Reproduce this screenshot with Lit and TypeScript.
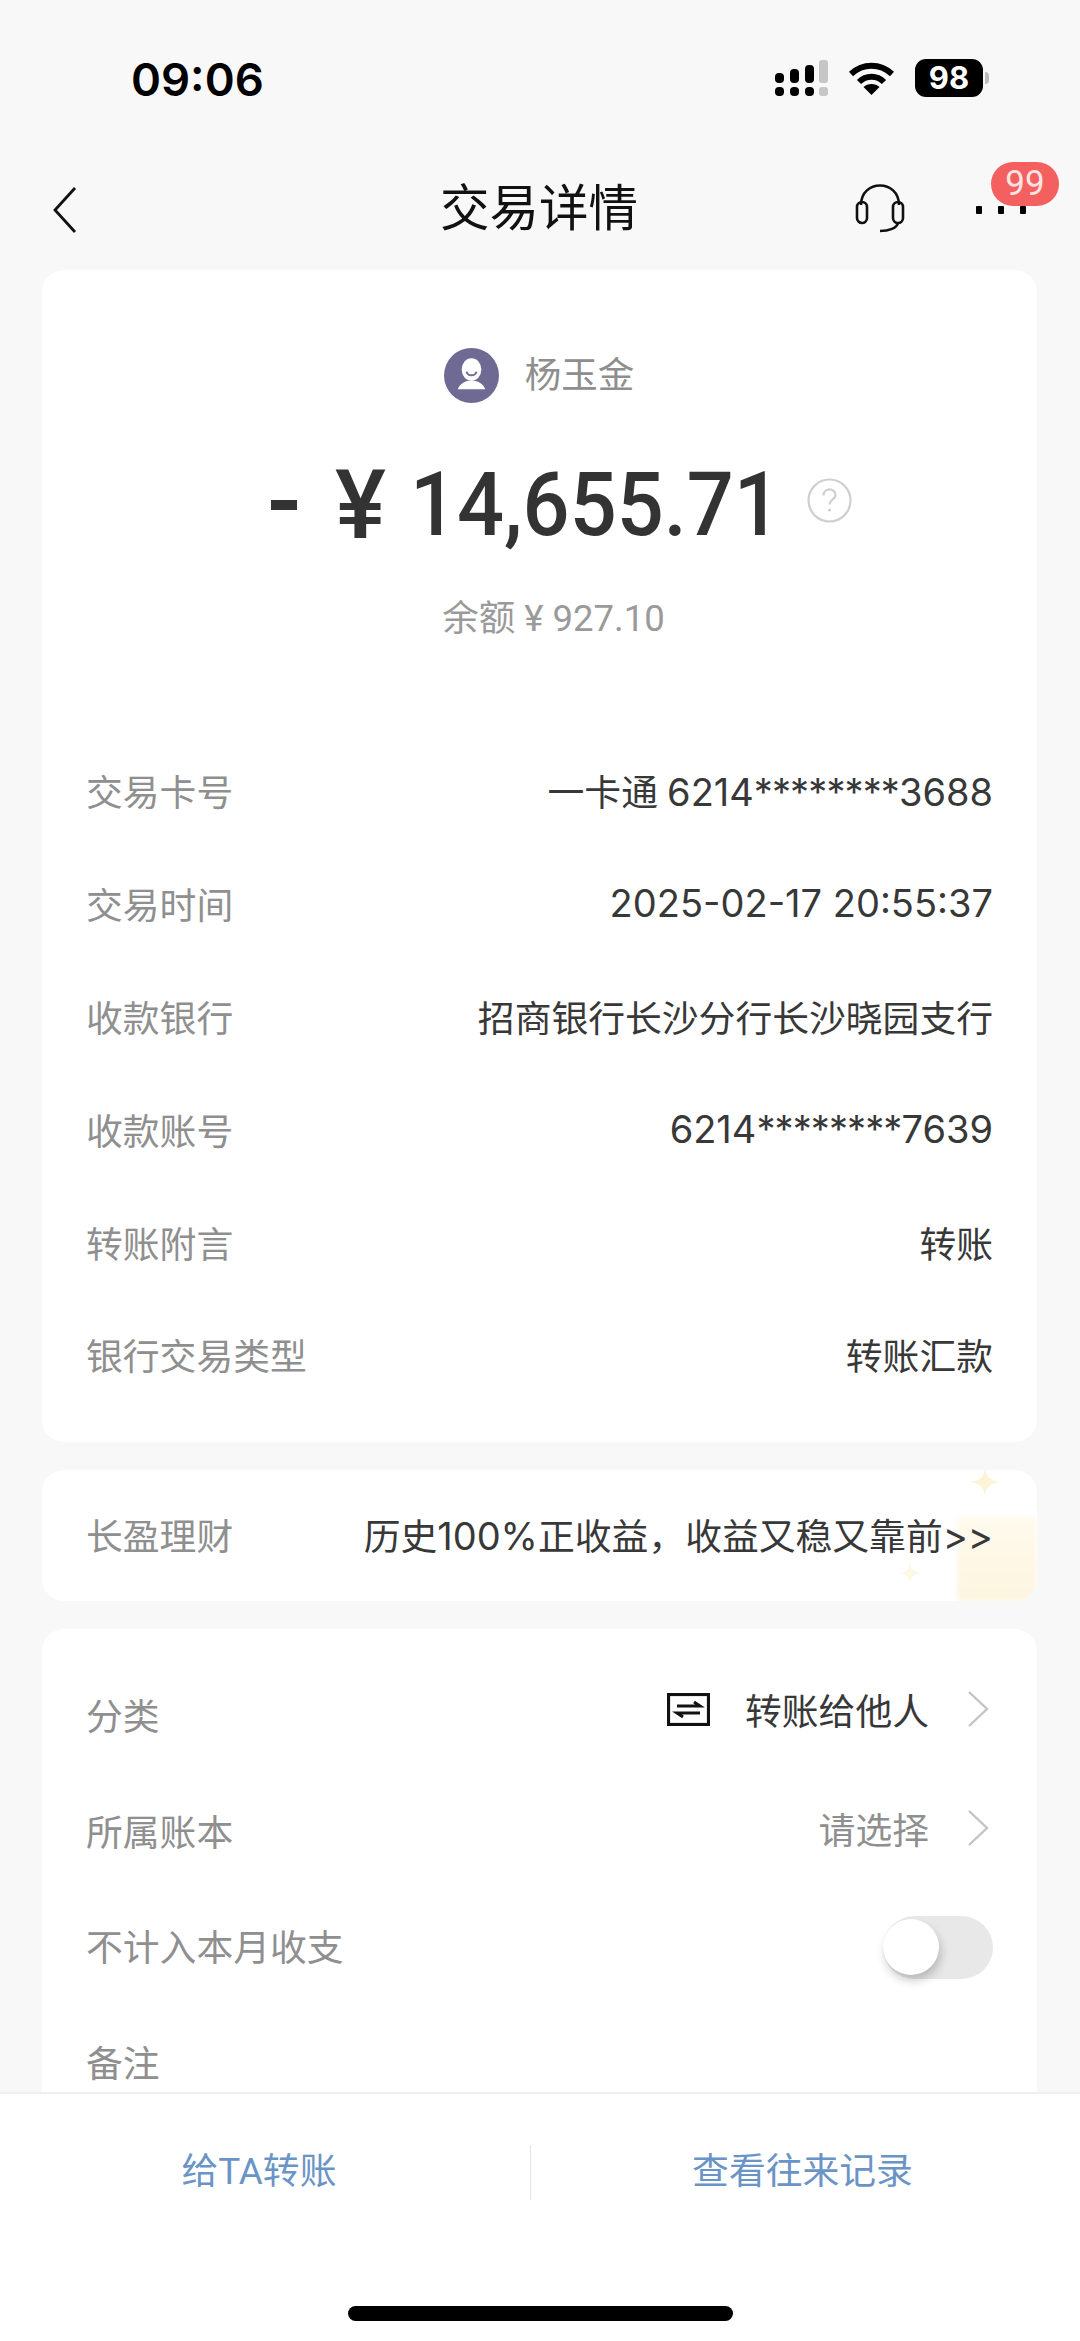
import { LitElement, html, css } from "lit";
import { customElement } from "lit/decorators.js";

const chevron = html`<svg class="chev" viewBox="0 0 22 36" fill="none" stroke="#c4c4c4" stroke-width="2.4"><path d="M2 1l18 17L2 35"/></svg>`;
const num = (s: string) => html`<span class="num">${s}</span>`;
const card = (a: string, b: string) => html`<span class="num">${a}<span class="mask">********</span>${b}</span>`;
const starPath = "M15 0c1 10 4 13 15 15-11 2-14 5-15 15-1-10-4-13-15-15 11-2 14-5 15-15z";

@customElement("app-root")
export class AppRoot extends LitElement {
  static styles = css`
    :host { display: block; font-family: Roboto, "Noto Sans CJK SC", sans-serif; }
    * { box-sizing: border-box; }
    .page { position: relative; width: 1080px; height: 2341px; overflow: hidden; background: #f8f8f8; display: flex; flex-direction: column; }
    .status { height: 114px; flex: none; display: flex; align-items: flex-end; justify-content: space-between; padding: 0 97px 12px 131px; }
    .time { font: 600 45.5px/44px Inter, sans-serif; color: #000; width: 132px; white-space: nowrap; }
    .status-icons { display: flex; align-items: center; gap: 20px; height: 40px; margin-bottom: 4px; }
    .signal { width: 53px; height: 36px; display: block; }
    .wifi { width: 47px; height: 34px; display: block; }
    .battery { position: relative; width: 68px; height: 38px; border-radius: 11px; background: #000; color: #fff; font: 700 31px/38px Inter, sans-serif; text-align: center; }
    .battery::after { content: ""; position: absolute; right: -6px; top: 13px; width: 4px; height: 12px; border-radius: 0 4px 4px 0; background: #bdbdbd; }
    .nav { position: relative; height: 156px; flex: none; display: flex; align-items: center; justify-content: center; padding-top: 33px; }
    .title { font-size: 49.5px; line-height: 60px; color: #111; margin-right: 2px; }
    .back { position: absolute; left: 52px; top: 73px; width: 26px; height: 46px; }
    .headset { position: absolute; left: 855px; top: 69px; width: 50px; height: 50px; }
    .dots { position: absolute; left: 976px; top: 92px; width: 50px; height: 8px; display: flex; justify-content: space-between; }
    .dots i { width: 6px; height: 8px; background: #000; border-radius: 1px; }
    .badge { position: absolute; left: 991px; top: 48px; width: 68px; height: 44px; border-radius: 22px; background: #f45f5f; color: #fde4e2; font: 400 35px/44px Roboto, sans-serif; text-align: center; }
    .cards { display: flex; flex-direction: column; gap: 28px; padding: 0 43px 0 42px; }
    .card { background: #fff; border-radius: 22px; flex: none; }
    .card-main { position: relative; height: 1172px; padding-top: 73px; }
    .payee { display: flex; align-items: center; justify-content: center; height: 58px; gap: 26px; padding-right: 1px; color: #8e8e8e; font-size: 36.5px; }
    .avatar { width: 55px; height: 55px; display: block; margin-top: 6px; }
    .amount { display: flex; align-items: center; height: 100px; margin-top: 54px; padding-left: 229px; color: #333; font: 500 89px/100px Roboto, sans-serif; white-space: nowrap; }
    .minus { width: 26px; height: 10px; background: #333; flex: none; }
    .yen { margin-left: 38px; width: 75px; flex: none; font-size: 96px; }
    .figures { display: inline-block; transform: scaleX(0.93); transform-origin: left center; }
    .help { position: absolute; left: 765px; top: 208px; width: 45px; height: 45px; }
    .balance { margin-top: 39px; height: 50px; text-align: center; font-size: 36.5px; line-height: 50px; color: #9a9a9a; padding-left: 28px; }
    .rows { margin-top: 90px; }
    .row { display: flex; align-items: center; justify-content: space-between; height: 112.800px; padding: 0 44px; font-size: 36.8px; white-space: nowrap; }
    .label { color: #8f8f8f; }
    .value { color: #383838; }
    .num { font-family: Inter, sans-serif; font-size: 38px; }
    .mask { letter-spacing: -0.9px; }
    .card-promo { position: relative; height: 131px; overflow: hidden; }
    .card-promo .row { position: relative; height: 127px; }
    .glow { position: absolute; right: 0; bottom: 0; width: 80px; height: 84px; background: linear-gradient(#fffaee, #fdf5df); filter: blur(2px); }
    .star { position: absolute; width: 30px; height: 30px; }
    .s1 { left: 928px; top: -3px; }
    .s2 { left: 857px; top: 92px; width: 22px; height: 22px; opacity: .7; }
    .card-cat { height: 620px; padding-top: 27.500px; }
    .card-cat .row { height: 115.500px; }
    .right { display: flex; align-items: center; margin-top: -4px; }
    .right.sel { margin-top: -10px; }
    .cat-icon { width: 43px; height: 33px; margin-right: 35px; display: block; }
    .muted { color: #8f8f8f; }
    .chev { width: 22px; height: 36px; margin-left: 38px; margin-right: 4px; display: block; }
    .toggle { position: relative; width: 110px; height: 63px; border-radius: 32px; background: #e8e8e8; margin-top: 4px; }
    .knob { position: absolute; left: 0; top: 3px; width: 56px; height: 56px; border-radius: 50%; background: #fff; box-shadow: 2px 6px 10px rgba(0,0,0,.2); }
    .footer { position: absolute; left: 0; right: 0; bottom: 0; height: 249px; background: #fff; border-top: 2px solid #efefef; }
    .actions { display: flex; align-items: center; height: 156px; color: #6b94c6; font-size: 36.8px; }
    .actions div { text-align: center; padding-bottom: 8px; }
    .a1 { width: 530px; padding-right: 12px; }
    .a2 { flex: 1; padding-right: 6px; }
    .sep { width: 1px; height: 55px; background: #e4e4e4; flex: none; }
    .home { position: absolute; left: 348px; top: 212px; width: 385px; height: 15px; border-radius: 8px; background: #000; }
  `;

  private row(l: unknown, v: unknown) {
    return html`<div class="row"><span class="label">${l}</span><span class="value">${v}</span></div>`;
  }

  render() {
    return html`
      <div class="page">
        <div class="status">
          <div class="time">09:06</div>
          <div class="status-icons">
            <svg class="signal" viewBox="0 0 53 36">
              <g fill="#000">
                <rect x="0" y="13" width="9" height="10" rx="4"/><rect x="0" y="27" width="9" height="9" rx="4"/>
                <rect x="15" y="9" width="9" height="14" rx="4"/><rect x="15" y="27" width="9" height="9" rx="4"/>
                <rect x="30" y="5" width="9" height="18" rx="4"/><rect x="30" y="27" width="9" height="9" rx="4"/>
              </g>
              <g fill="#c6c6c6">
                <rect x="44" y="0" width="9" height="23" rx="3"/><rect x="44" y="27" width="9" height="9" rx="3"/>
              </g>
            </svg>
            <svg class="wifi" viewBox="0 0 47 34" fill="none" stroke="#000" stroke-width="6">
              <path d="M3 13c12-11 29-11 41 0"/><path d="M11 21c7-7 18-7 25 0"/>
              <path d="M23.500 34l-8-8c4-4 12-4 16 0z" fill="#000" stroke="none"/>
            </svg>
            <div class="battery">98</div>
          </div>
        </div>
        <div class="nav">
          <svg class="back" viewBox="0 0 26 46" fill="none" stroke="#111" stroke-width="2.800"><path d="M23 1L3 23l20 22"/></svg>
          <div class="title">交易详情</div>
          <svg class="headset" viewBox="0 0 50 50" fill="none" stroke="#111" stroke-width="2.600">
            <path d="M6 22C6 -4 44 -4 44 22"/>
            <rect x="2" y="19" width="10" height="21" rx="5"/>
            <rect x="38" y="19" width="10" height="21" rx="5"/>
            <path d="M43 40c-1 5-9 8-18 8"/>
          </svg>
          <div class="dots"><i></i><i></i><i></i></div>
          <div class="badge">99</div>
        </div>
        <div class="cards">
          <div class="card card-main">
            <div class="payee">
              <svg class="avatar" viewBox="0 0 56 56">
                <circle cx="28" cy="28" r="28" fill="#6f6a94"/>
                <ellipse cx="28" cy="22" rx="10" ry="11.500" fill="#fff"/>
                <path d="M23 24c1 5 9 5 10 0" fill="none" stroke="#6f6a94" stroke-width="2"/>
                <path d="M14 42c2-6 8-9 14-9s12 3 14 9z" fill="#fff"/>
              </svg>
              <span>杨玉金</span>
            </div>
            <div class="amount">
              <span class="minus"></span>
              <span class="yen">¥</span>
              <span class="figures">14,655.71</span>
            </div>
            <svg class="help" viewBox="0 0 45 45" fill="none">
              <circle cx="22.500" cy="22.500" r="21" stroke="#cfcfcf" stroke-width="2.200"/>
              <path d="M16.500 17.500c0-8 12-8 12-.5 0 4.500-6 4.500-6 9.500" stroke="#cfcfcf" stroke-width="2.200"/>
              <circle cx="22.500" cy="32" r="1.500" fill="#cfcfcf"/>
            </svg>
            <div class="balance">余额 ¥ 927.10</div>
            <div class="rows">
              ${this.row("交易卡号", html`一卡通 ${card("6214", "3688")}`)}
              ${this.row("交易时间", num("2025-02-17 20:55:37"))}
              ${this.row("收款银行", "招商银行长沙分行长沙晓园支行")}
              ${this.row("收款账号", card("6214", "7639"))}
              ${this.row("转账附言", "转账")}
              ${this.row("银行交易类型", "转账汇款")}
            </div>
          </div>
          <div class="card card-promo">
            <div class="glow"></div>
            <svg class="star s1" viewBox="0 0 30 30"><path d=${starPath} fill="#fdf4d8"/></svg>
            <svg class="star s2" viewBox="0 0 30 30"><path d=${starPath} fill="#fdf4d8"/></svg>
            <div class="row"><span class="label">长盈理财</span><span class="value">历史${num("100%")}正收益${"\uFF0C"}收益又稳又靠前${num(">>")}</span></div>
          </div>
          <div class="card card-cat">
            <div class="row">
              <span class="label">分类</span>
              <span class="right sel">
                <svg class="cat-icon" viewBox="0 0 43 33" fill="none" stroke="#111">
                  <rect x="1.500" y="1.500" width="40" height="30" stroke-width="3.200"/>
                  <path d="M10 13h23l-6-4M33 20H10l6 4" stroke-width="3"/>
                </svg>
                <span class="value">转账给他人</span>${chevron}
              </span>
            </div>
            <div class="row">
              <span class="label">所属账本</span>
              <span class="right"><span class="muted">请选择</span>${chevron}</span>
            </div>
            <div class="row">
              <span class="label">不计入本月收支</span>
              <span class="toggle"><span class="knob"></span></span>
            </div>
            <div class="row"><span class="label">备注</span></div>
          </div>
        </div>
        <div class="footer">
          <div class="actions">
            <div class="a1">给TA转账</div>
            <span class="sep"></span>
            <div class="a2">查看往来记录</div>
          </div>
          <div class="home"></div>
        </div>
      </div>
    `;
  }
}
